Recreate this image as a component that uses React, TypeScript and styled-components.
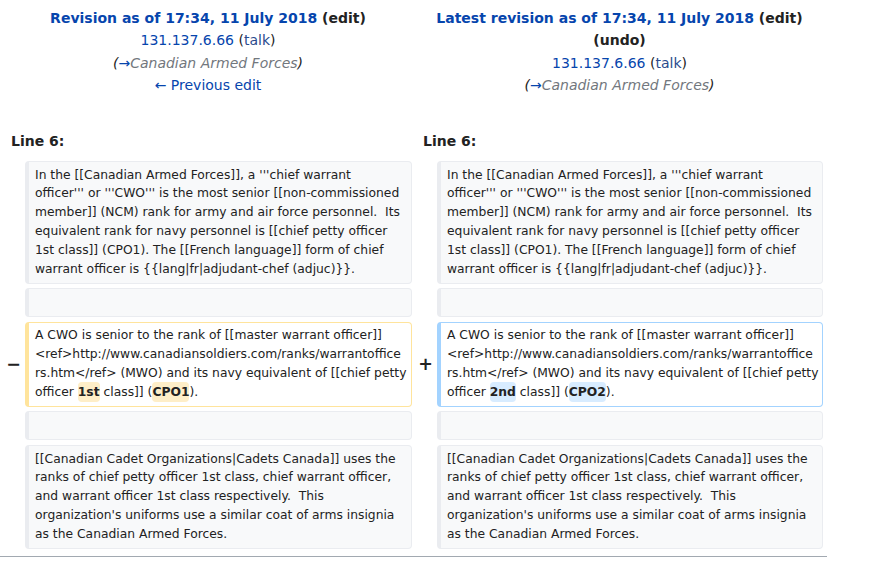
import React from "react";
import styled, { createGlobalStyle, css } from "styled-components";

const Global = createGlobalStyle`
  html, body { margin: 0; padding: 0; background: #fff; }
  body {
    font-family: "DejaVu Sans", "Liberation Sans", sans-serif;
    font-size: 14px;
    color: #222;
  }
`;

const Page = styled.div`
  width: 828px;
`;

const DiffGrid = styled.div`
  display: grid;
  grid-template-columns: 17px 387px 17px 386px;
  column-gap: 4px;
  row-gap: 4.7px;
  padding: 4px;
`;

const TitleCell = styled.div`
  grid-column: span 2;
  text-align: center;
  padding: 3px 6px;
  line-height: 22.4px;
  font-size: 14px;
`;

const TitleLine = styled.div``;

const Strong = styled.strong`
  font-weight: bold;
`;

const Link = styled.a`
  color: #0645ad;
  text-decoration: none;
  cursor: pointer;
`;

const TalkLink = styled(Link)`
  color: #2a4b8d;
`;

const Comment = styled.span`
  font-style: italic;
`;

const AutoComment = styled.span`
  color: #72777d;
`;

const LineNo = styled.div`
  grid-column: span 2;
  font-weight: bold;
  font-size: 14px;
  line-height: 22.4px;
  padding: 25.3px 7px 4px;
`;

const Marker = styled.div`
  align-self: center;
  text-align: right;
  font-weight: bold;
  font-size: 17.5px;
  line-height: 1.2;
`;

type Kind = "context" | "deleted" | "added";

const ContentBox = styled.div<{ $kind: Kind }>`
  font-size: 12.32px;
  line-height: 18.84px;
  padding: 3.9px 6px;
  border-style: solid;
  border-width: 1px 1px 1px 4px;
  border-radius: 4px;
  color: #222;
  ${(p) =>
    p.$kind === "context"
      ? css`
          background: #f8f9fa;
          border-color: #eaecf0;
        `
      : p.$kind === "deleted"
      ? css`
          background: #fff;
          border-color: #ffe49c;
        `
      : css`
          background: #fff;
          border-color: #a3d3ff;
        `}
`;

const TextLine = styled.div`
  white-space: pre;
  min-height: 18.84px;
`;

const Change = styled.span<{ $kind: "deleted" | "added" }>`
  font-weight: bold;
  border-radius: 4px;
  padding: 3px 0;
  background: ${(p) => (p.$kind === "deleted" ? "#feeec8" : "#d8ecff")};
`;

const DiffHr = styled.div`
  height: 1px;
  background: #a2a9b1;
  margin-top: 3px;
  width: 827px;
`;

const para1 = [
  "In the [[Canadian Armed Forces]], a '''chief warrant",
  "officer''' or '''CWO''' is the most senior [[non-commissioned",
  "member]] (NCM) rank for army and air force personnel.  Its",
  "equivalent rank for navy personnel is [[chief petty officer",
  "1st class]] (CPO1). The [[French language]] form of chief",
  "warrant officer is {{lang|fr|adjudant-chef (adjuc)}}.",
];

const para3 = [
  "[[Canadian Cadet Organizations|Cadets Canada]] uses the",
  "ranks of chief petty officer 1st class, chief warrant officer,",
  "and warrant officer 1st class respectively.  This",
  "organization's uniforms use a similar coat of arms insignia",
  "as the Canadian Armed Forces.",
];

const changedLines = [
  "A CWO is senior to the rank of [[master warrant officer]]",
  "<ref>http://www.canadiansoldiers.com/ranks/warrantoffice",
  "rs.htm</ref> (MWO) and its navy equivalent of [[chief petty",
];

function ChangedPara({ kind, ord, cpo }: { kind: "deleted" | "added"; ord: string; cpo: string }) {
  return (
    <ContentBox $kind={kind}>
      {changedLines.map((l, i) => (
        <TextLine key={i}>{l}</TextLine>
      ))}
      <TextLine>
        {"officer "}
        <Change $kind={kind}>{ord}</Change>
        {" class]] ("}
        <Change $kind={kind}>{cpo}</Change>
        {")."}
      </TextLine>
    </ContentBox>
  );
}

function Para({ lines }: { lines: string[] }) {
  return (
    <ContentBox $kind="context">
      {lines.map((l, i) => (
        <TextLine key={i}>{l}</TextLine>
      ))}
    </ContentBox>
  );
}

function ContextRow({ lines }: { lines: string[] }) {
  return (
    <>
      <Marker />
      <Para lines={lines} />
      <Marker />
      <Para lines={lines} />
    </>
  );
}

function UserLine() {
  return (
    <TitleLine>
      <Link>131.137.6.66</Link> (<TalkLink>talk</TalkLink>)
    </TitleLine>
  );
}

function SummaryLine() {
  return (
    <TitleLine>
      <Comment>
        (<Link>→</Link>
        <AutoComment>Canadian Armed Forces</AutoComment>)
      </Comment>
    </TitleLine>
  );
}

export default function App() {
  return (
    <Page>
      <Global />
      <DiffGrid>
        <TitleCell>
          <TitleLine>
            <Strong>
              <Link>Revision as of 17:34, 11 July 2018</Link> (edit)
            </Strong>
          </TitleLine>
          <UserLine />
          <SummaryLine />
          <TitleLine>
            <Link>← Previous edit</Link>
          </TitleLine>
        </TitleCell>
        <TitleCell>
          <TitleLine>
            <Strong>
              <Link>Latest revision as of 17:34, 11 July 2018</Link> (edit) (undo)
            </Strong>
          </TitleLine>
          <UserLine />
          <SummaryLine />
        </TitleCell>

        <LineNo>Line 6:</LineNo>
        <LineNo>Line 6:</LineNo>

        <ContextRow lines={para1} />
        <ContextRow lines={[""]} />

        <Marker>−</Marker>
        <ChangedPara kind="deleted" ord="1st" cpo="CPO1" />
        <Marker>+</Marker>
        <ChangedPara kind="added" ord="2nd" cpo="CPO2" />

        <ContextRow lines={[""]} />
        <ContextRow lines={para3} />
      </DiffGrid>
      <DiffHr />
    </Page>
  );
}
